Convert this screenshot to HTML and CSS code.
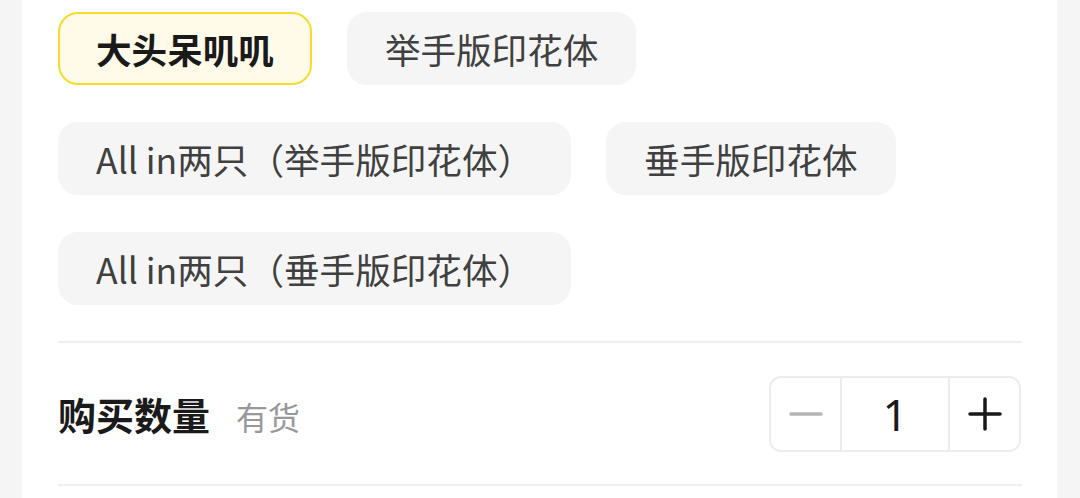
FILE: index.html
```html
<!DOCTYPE html>
<html lang="zh-CN">
<head>
  <meta charset="UTF-8" />
  <meta name="viewport" content="width=device-width, initial-scale=1.0">
  <title>选择款式</title>
  <link rel="stylesheet" href="styles.css">
</head>
<body>
  <div class="sheet">
    <!-- 款式 -->
    <section class="options">
      <div class="chip selected">大头呆叽叽</div>
      <div class="chip">举手版印花体</div>
      <div class="chip">All in两只（举手版印花体）</div>
      <div class="chip">垂手版印花体</div>
      <div class="chip">All in两只（垂手版印花体）</div>
    </section>

    <!-- 数量 -->
    <section class="qty-row">
      <div class="qty-label">
        <span class="qty-title">购买数量</span>
        <span class="stock">有货</span>
      </div>
      <div class="stepper">
        <button class="step minus">
          <svg width="34" height="34" viewBox="0 0 34 34"><path d="M2 17h30" stroke="#b5b5b5" stroke-width="3.5" stroke-linecap="round"/></svg>
        </button>
        <div class="count">1</div>
        <button class="step plus">
          <svg width="34" height="34" viewBox="0 0 34 34"><path d="M2 17h30M17 2v30" stroke="#1a1a1a" stroke-width="3.5" stroke-linecap="round"/></svg>
        </button>
      </div>
    </section>
  </div>
</body>
</html>
```

FILE: styles.css
```css
body {
  margin: 0;
  background: #f5f5f5;
  font-family: "Noto Sans CJK SC", "Noto Sans", sans-serif;
  height: 498px;
  overflow: hidden;
}

.sheet {
  margin: 0 23px 0 22px;
  background: #ffffff;
  padding: 12px 35px 0 36px;
  height: 498px;
  box-sizing: border-box;
}

.options {
  display: flex;
  flex-wrap: wrap;
  gap: 37px 35px;
  padding-bottom: 36px;
  border-bottom: 2px solid #f0f0f0;
}

.chip {
  height: 73px;
  box-sizing: border-box;
  padding: 0 36px;
  display: flex;
  align-items: center;
  background: #f5f5f5;
  border: 2px solid #f5f5f5;
  border-radius: 20px;
  font-size: 35.6px;
  color: #404040;
  white-space: nowrap;
}

.chip.selected {
  background: #fffbe8;
  border-color: #f7dc2e;
  color: #1a1a1a;
  font-weight: bold;
}

.qty-row {
  display: flex;
  align-items: center;
  justify-content: space-between;
  height: 141px;
  border-bottom: 2px solid #f0f0f0;
}

.qty-label {
  display: flex;
  align-items: baseline;
  gap: 26px;
}

.qty-title {
  font-size: 38px;
  font-weight: bold;
  color: #1a1a1a;
}

.stock {
  font-size: 32px;
  color: #999999;
}

.stepper {
  display: flex;
  height: 72px;
  border: 2px solid #ececec;
  border-radius: 12px;
  margin-right: 1px;
}

.step {
  width: 69px;
  border: none;
  background: none;
  padding: 0;
  display: flex;
  align-items: center;
  justify-content: center;
}

.count {
  width: 106px;
  border-left: 2px solid #ececec;
  border-right: 2px solid #ececec;
  display: flex;
  align-items: center;
  justify-content: center;
  font-family: "Noto Sans", sans-serif;
  font-size: 44px;
  color: #1a1a1a;
}
```
